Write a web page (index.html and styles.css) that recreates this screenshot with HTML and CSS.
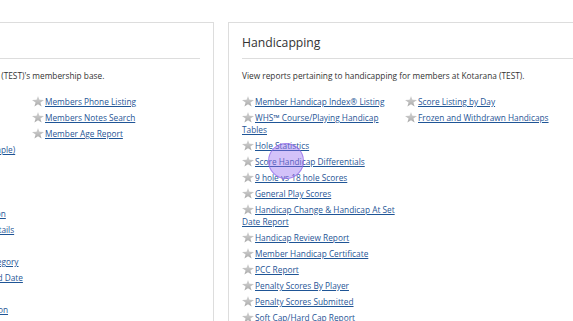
FILE: index.html
```html
<!DOCTYPE html>
<html lang="en">

<head>
    <meta charset="UTF-8">
    <meta name="viewport" content="width=device-width, initial-scale=1.0">
    <title>Reports</title>

    <link rel="stylesheet" href="styles.css">
</head>

<body>
    <div class="page">

        <!-- 会员报表 -->
        <div class="panel panel-members">
            <h2>Members</h2>
            <p class="desc">View reports relevant to Kotarana (TEST)'s membership base.</p>
            <div class="cols">
                <ul>
                    <li><span class="star"></span><a href="#">Members Listing</a></li>
                    <li><span class="star"></span><a href="#">Member Birthday Listing</a></li>
                    <li><span class="star"></span><a href="#">Members Address Listing</a></li>
                    <li><span class="star"></span><a href="#">Members Contact Listings (Simple)</a></li>
                    <li><span class="star"></span><a href="#">Members Email Listing</a></li>
                    <li><span class="star"></span><a href="#">Members Mailing Labels</a></li>
                    <li><span class="star"></span><a href="#">New Members Report</a></li>
                    <li><span class="star"></span><a href="#">Members Handicap Information</a></li>
                    <li><span class="star"></span><a href="#">Membership Subscriptions Details</a></li>
                    <li><span class="star"></span><a href="#">Resigned Members</a></li>
                    <li><span class="star"></span><a href="#">Membership Summary by Category</a></li>
                    <li><span class="star"></span><a href="#">Members Joined Since Selected Date</a></li>
                    <li><span class="star"></span><a href="#">Members by Gender</a></li>
                    <li><span class="star"></span><a href="#">Member Locker Room Allocation</a></li>
                </ul>
                <ul>
                    <li><span class="star"></span><a href="#">Members Phone Listing</a></li>
                    <li><span class="star"></span><a href="#">Members Notes Search</a></li>
                    <li><span class="star"></span><a href="#">Member Age Report</a></li>
                </ul>
            </div>
        </div>

        <!-- 差点报表 -->
        <div class="panel panel-handicap">
            <h2>Handicapping</h2>
            <p class="desc">View reports pertaining to handicapping for members at Kotarana (TEST).</p>
            <div class="cols">
                <ul>
                    <li><span class="star"></span><a href="#">Member Handicap Index® Listing</a></li>
                    <li><span class="star"></span><a href="#">WHS™ Course/Playing Handicap Tables</a></li>
                    <li><span class="star"></span><a href="#">Hole Statistics</a></li>
                    <li><span class="star"></span><a href="#">Score Handicap Differentials</a></li>
                    <li><span class="star"></span><a href="#">9 hole vs 18 hole Scores</a></li>
                    <li><span class="star"></span><a href="#">General Play Scores</a></li>
                    <li><span class="star"></span><a href="#">Handicap Change &amp; Handicap At Set Date Report</a></li>
                    <li><span class="star"></span><a href="#">Handicap Review Report</a></li>
                    <li><span class="star"></span><a href="#">Member Handicap Certificate</a></li>
                    <li><span class="star"></span><a href="#">PCC Report</a></li>
                    <li><span class="star"></span><a href="#">Penalty Scores By Player</a></li>
                    <li><span class="star"></span><a href="#">Penalty Scores Submitted</a></li>
                    <li><span class="star"></span><a href="#">Soft Cap/Hard Cap Report</a></li>
                </ul>
                <ul>
                    <li><span class="star"></span><a href="#">Score Listing by Day</a></li>
                    <li><span class="star"></span><a href="#">Frozen and Withdrawn Handicaps</a></li>
                </ul>
            </div>
        </div>
    </div>

    <!-- 点击位置的提示圈 -->
    <div class="click-dot"></div>
</body>
</html>
```

FILE: styles.css
```css
html,
body {
    height: 100%;
}

body {
    margin: 0;
    overflow: hidden;
    background: #fff;
    font-family: "Open Sans", "Liberation Sans", sans-serif;
    color: #333;
}

.page {
    display: flex;
    gap: 14px;
    margin-left: -146px;
    padding-top: 22px;
}

.panel {
    flex: none;
    width: 331px;
    border: 1px solid #ddd;
    padding: 0 13px 40px 14px;
}

.panel-handicap {
    padding-left: 13px;
}

.panel h2 {
    margin: 0;
    padding: 10px 0 5px;
    font-size: 12.2px;
    line-height: 20px;
    font-weight: normal;
    color: #333;
    border-bottom: 1px solid #ddd;
}

.desc {
    margin: 11px 0 14px;
    font-size: 8.3px;
    line-height: 12px;
}

.cols {
    display: grid;
    grid-template-columns: 163px 163px;
}

.cols ul {
    list-style: none;
    margin: 0;
    padding: 0;
}

.cols li {
    font-size: 8.3px;
    line-height: 12px;
    margin-bottom: 4px;
    padding-right: 3px;
}

.cols a {
    color: #1f5596;
    text-decoration: underline;
}

/* 灰色星星 */
.star {
    display: inline-block;
    width: 12px;
    height: 11px;
    margin-right: 1px;
    vertical-align: top;
    background: linear-gradient(#d6d6d6, #a8a8a8);
    clip-path: polygon(50% 0%, 62% 35%, 100% 36%, 70% 58%, 80% 95%, 50% 74%, 20% 95%, 30% 58%, 0% 36%, 38% 35%);
}

.click-dot {
    position: absolute;
    left: 268px;
    top: 143px;
    width: 34px;
    height: 34px;
    border-radius: 50%;
    background: rgba(150, 110, 240, 0.42);
    border: 1px solid rgba(140, 95, 230, 0.65);
}
```
